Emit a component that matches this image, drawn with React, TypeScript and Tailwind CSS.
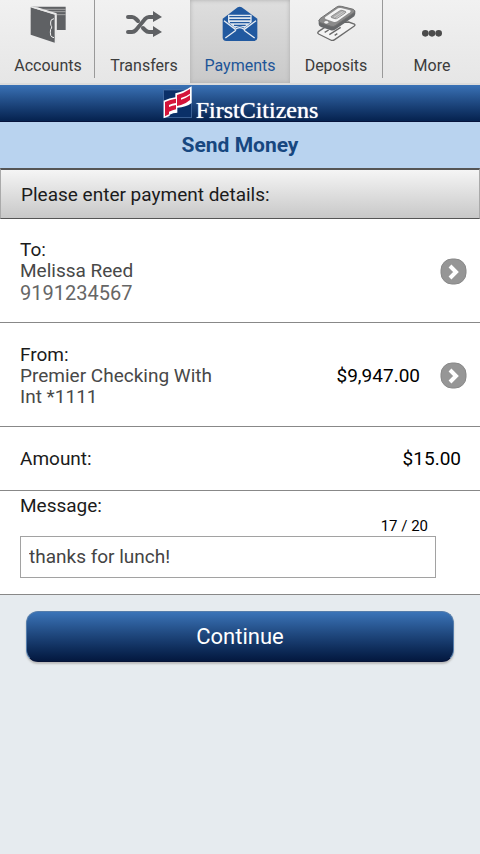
import { useState } from 'react';
import type { ReactNode } from 'react';

function AccountsIcon() {
  return (
    <svg width="40" height="40" viewBox="12 6 120 120">
      <path d="M20 14H125V84H98V34L40 16Z" fill="#5f6164" />
      <path d="M52 22H125M70 29H125M88 38H125" stroke="#c4c4c4" strokeWidth="2" fill="none" />
      <path d="M20 16L92 38V122L20 98Z" fill="#5f6164" />
      <path d="M22 15L96 37V122" stroke="#e6e6e6" strokeWidth="3" fill="none" />
      <path d="M90 50Q79 52 80 60V66Q80 70 83 74Q84 78 80 82Q78 90 80 100Q82 106 90 107" stroke="#f0f0f0" strokeWidth="3" fill="none" />
    </svg>
  );
}

function TransfersIcon() {
  return (
    <svg width="40" height="40" viewBox="124 4 40 40">
      <path d="M128 17H132Q134 17 136 19L138 21M143 28L145 30Q147 32 149 32H154M128 32H132Q134 32 136 30L145 19Q147 17 149 17H154" stroke="#5f6164" strokeWidth="4" strokeLinecap="round" fill="none" />
      <path d="M153 11L162 17L153 22ZM153 26L162 32L153 37Z" fill="#5f6164" />
    </svg>
  );
}

function PaymentsIcon() {
  return (
    <svg width="40" height="40" viewBox="12 6 120 120">
      <path d="M20 50L65 16Q71 12 77 16L124 50V106Q124 117 113 117H31Q20 117 20 106Z" fill="#2159a0" />
      <path d="M36 38H107V61L86 78Q71 68 57 78L36 61Z" fill="#dde5ee" />
      <path d="M40 44H103M40 53H103M42 62H101M54 70H89" stroke="#2159a0" strokeWidth="4" />
      <path d="M24 56L58 82Q71 72 85 82L120 56M28 108L60 85M116 108L84 85" stroke="#e8edf3" strokeWidth="4" fill="none" />
    </svg>
  );
}

function DepositsIcon() {
  return (
    <svg width="40" height="40" viewBox="12 6 120 120">
      <path d="M19 89L56 64L110 60L127 66Q131 69 126 73L68 113Q62 117 56 114L20 96Q15 93 19 89Z" fill="#f3f3f3" stroke="#6b6b6b" strokeWidth="4" />
      <path d="M38 91L50 84M52 98L86 76M68 100L76 95" stroke="#666" strokeWidth="4" />
      <path d="M20 54V66Q20 72 27 75L56 85Q64 87 71 82L127 43Q131 39 130 27Z" fill="#66686a" />
      <path d="M24 50L74 15Q80 11 88 13L124 22Q132 26 126 32L70 71Q64 75 57 73L25 62Q17 57 24 50Z" fill="#8b8b8b" stroke="#717171" strokeWidth="3" />
      <path d="M40 45L78 19Q82 17 87 18L114 25Q119 27 114 31L76 58Q71 61 66 60L41 51Q36 48 40 45Z" fill="#f4f4f4" />
      <path d="M58 43L84 26Q86 24 90 25L100 28Q104 30 100 33L76 49Q73 51 69 50L59 47Q55 45 58 43Z" fill="#aaa" stroke="#777" strokeWidth="2" />
      <path d="M66 46L92 29M73 48L98 31" stroke="#e0e0e0" strokeWidth="2" />
      <ellipse cx="43" cy="61" rx="6" ry="4" fill="#eee" />
    </svg>
  );
}

function MoreIcon() {
  return (
    <svg width="40" height="40" viewBox="12 6 120 120">
      <g fill="#4b4b4b">
        <circle cx="52" cy="94" r="10" />
        <circle cx="72" cy="94" r="10" />
        <circle cx="92" cy="94" r="10" />
      </g>
    </svg>
  );
}

function Logo() {
  return (
    <svg width="30" height="34" viewBox="60 18 90 102">
      <rect x="65" y="30" width="83" height="83" fill="#0a3068" stroke="#4f76ac" strokeWidth="2" />
      <path d="M65 62Q82 54 100 52V40Q124 36 149 19V69Q132 82 106 83V98Q93 98 83 104V108L65 115Z" fill="#fff" />
      <path d="M105 45Q125 40 144 27V41Q132 50 117 54V59Q132 55 144 46V60Q130 72 117 75L105 78Z" fill="#d4143a" />
      <path d="M69 66Q84 58 102 56V69Q90 71 81 75V81Q90 77 102 75V88Q92 90 81 95V103L69 109Z" fill="#d4143a" />
    </svg>
  );
}

function Chevron() {
  return (
    <svg width="27" height="27" viewBox="0 0 27 27">
      <rect x="1" y="1" width="25" height="25" rx="11" fill="#969696" stroke="#888" />
      <path d="M10 8L16 14L10 20" stroke="#fff" strokeWidth="4" fill="none" />
    </svg>
  );
}

const tabs: { label: string; icon: ReactNode; active?: boolean; divider?: boolean }[] = [
  { label: 'Accounts', icon: <AccountsIcon />, divider: true },
  { label: 'Transfers', icon: <TransfersIcon /> },
  { label: 'Payments', icon: <PaymentsIcon />, active: true },
  { label: 'Deposits', icon: <DepositsIcon />, divider: true },
  { label: 'More', icon: <MoreIcon /> },
];

export default function App() {
  const [message, setMessage] = useState('thanks for lunch!');
  const [amount, setAmount] = useState('$15.00');

  return (
    <div className="min-h-screen bg-[#e6ebef] font-['Roboto',sans-serif] text-[19px] leading-[21px] text-[#1b1b1b]">
      <nav className="grid h-[85px] grid-cols-5 border-b-2 border-[#dcdcdc] bg-linear-to-b from-[#f1f1f1] to-[#e6e6e6]">
        {tabs.map(tab => (
          <button
            key={tab.label}
            className={
              tab.active
                ? '-mx-0.5 flex flex-col items-center bg-linear-to-b from-[#dedede] to-[#c9c9c9] pt-1 text-[#1d5598] shadow-[inset_0_0_4px_#aaa]'
                : 'relative flex flex-col items-center pt-1 text-[#3c3c3c]'
            }
          >
            {tab.icon}
            <span className="mt-3 text-base leading-5">{tab.label}</span>
            {tab.divider && <span className="absolute top-0 right-px h-[78px] w-px bg-[#999]" />}
          </button>
        ))}
      </nav>

      <header className="flex h-[37px] items-center justify-center gap-1 border-b border-[#06143c] bg-linear-to-b from-[#3a72b6] to-[#06224f]">
        <Logo />
        <span className="pt-3.5 font-['Liberation_Serif',serif] text-2xl leading-6 text-white text-shadow-[0_0_1px_#fff]">FirstCitizens</span>
      </header>

      <h1 className="flex h-[46px] items-center justify-center bg-[#b9d3ef] text-[21px] font-bold text-[#174780]">Send Money</h1>

      <form onSubmit={e => e.preventDefault()}>
        <h2 className="flex h-[51px] items-center border border-t-2 border-[#555] border-x-[#aaa] bg-linear-to-b from-[#f5f5f5] to-[#c8c8c8] px-5">
          Please enter payment details:
        </h2>

        <div className="bg-white">
          <button type="button" className="flex h-[104px] w-full items-center border-b border-[#888] pt-0.5 pr-[13px] pl-5 text-left">
            <span className="flex-1">
              <span className="block">To:</span>
              <span className="block text-[#484848]">Melissa Reed</span>
              <span className="block text-xl leading-6 text-[#666]">9191234567</span>
            </span>
            <Chevron />
          </button>

          <button type="button" className="flex h-[104px] w-full items-center border-b border-[#888] pt-0.5 pr-[13px] pl-5 text-left">
            <span className="flex-1">
              <span className="block">From:</span>
              <span className="block w-[200px] text-[#484848]">Premier Checking With Int *1111</span>
            </span>
            <span className="mr-5 text-black">$9,947.00</span>
            <Chevron />
          </button>

          <div className="flex h-16 items-center justify-between border-b border-[#888] pr-[19px] pl-5">
            <label htmlFor="amount">Amount:</label>
            <input id="amount" className="w-40 text-right text-black outline-none" value={amount} onChange={e => setAmount(e.target.value)} />
          </div>

          <div className="border-b border-[#888] pt-1 pr-11 pb-4 pl-5">
            <label htmlFor="message" className="block">Message:</label>
            <div className="pr-2 text-right text-[15px] leading-5 text-black">{message.length} / 20</div>
            <input
              id="message"
              maxLength={20}
              className="block h-[42px] w-full border border-[#a2a2a2] px-2 pb-0.5 text-[#444] outline-none"
              value={message}
              onChange={e => setMessage(e.target.value)}
            />
          </div>
        </div>

        <div className="px-[26px] pt-4">
          <button className="h-[51px] w-full rounded-xl border border-[#557dab] border-b-[#071337] bg-linear-to-b from-[#3b74b8] to-[#04183f] text-[22px] text-white shadow-[0_2px_2px_#bbb]">
            Continue
          </button>
        </div>
      </form>
    </div>
  );
}
